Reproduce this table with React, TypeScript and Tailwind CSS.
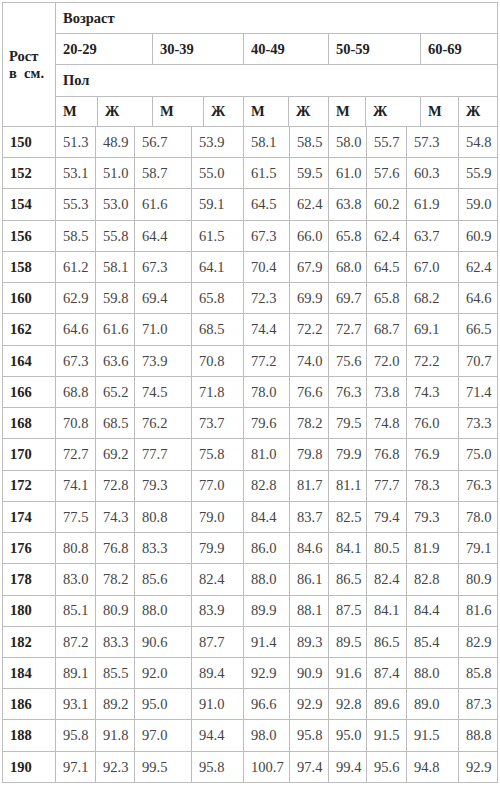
import React from "react";

const data: [string, string[]][] = [
  ["150", ["51.3", "48.9", "56.7", "53.9", "58.1", "58.5", "58.0", "55.7", "57.3", "54.8"]],
  ["152", ["53.1", "51.0", "58.7", "55.0", "61.5", "59.5", "61.0", "57.6", "60.3", "55.9"]],
  ["154", ["55.3", "53.0", "61.6", "59.1", "64.5", "62.4", "63.8", "60.2", "61.9", "59.0"]],
  ["156", ["58.5", "55.8", "64.4", "61.5", "67.3", "66.0", "65.8", "62.4", "63.7", "60.9"]],
  ["158", ["61.2", "58.1", "67.3", "64.1", "70.4", "67.9", "68.0", "64.5", "67.0", "62.4"]],
  ["160", ["62.9", "59.8", "69.4", "65.8", "72.3", "69.9", "69.7", "65.8", "68.2", "64.6"]],
  ["162", ["64.6", "61.6", "71.0", "68.5", "74.4", "72.2", "72.7", "68.7", "69.1", "66.5"]],
  ["164", ["67.3", "63.6", "73.9", "70.8", "77.2", "74.0", "75.6", "72.0", "72.2", "70.7"]],
  ["166", ["68.8", "65.2", "74.5", "71.8", "78.0", "76.6", "76.3", "73.8", "74.3", "71.4"]],
  ["168", ["70.8", "68.5", "76.2", "73.7", "79.6", "78.2", "79.5", "74.8", "76.0", "73.3"]],
  ["170", ["72.7", "69.2", "77.7", "75.8", "81.0", "79.8", "79.9", "76.8", "76.9", "75.0"]],
  ["172", ["74.1", "72.8", "79.3", "77.0", "82.8", "81.7", "81.1", "77.7", "78.3", "76.3"]],
  ["174", ["77.5", "74.3", "80.8", "79.0", "84.4", "83.7", "82.5", "79.4", "79.3", "78.0"]],
  ["176", ["80.8", "76.8", "83.3", "79.9", "86.0", "84.6", "84.1", "80.5", "81.9", "79.1"]],
  ["178", ["83.0", "78.2", "85.6", "82.4", "88.0", "86.1", "86.5", "82.4", "82.8", "80.9"]],
  ["180", ["85.1", "80.9", "88.0", "83.9", "89.9", "88.1", "87.5", "84.1", "84.4", "81.6"]],
  ["182", ["87.2", "83.3", "90.6", "87.7", "91.4", "89.3", "89.5", "86.5", "85.4", "82.9"]],
  ["184", ["89.1", "85.5", "92.0", "89.4", "92.9", "90.9", "91.6", "87.4", "88.0", "85.8"]],
  ["186", ["93.1", "89.2", "95.0", "91.0", "96.6", "92.9", "92.8", "89.6", "89.0", "87.3"]],
  ["188", ["95.8", "91.8", "97.0", "94.4", "98.0", "95.8", "95.0", "91.5", "91.5", "88.8"]],
  ["190", ["97.1", "92.3", "99.5", "95.8", "100.7", "97.4", "99.4", "95.6", "94.8", "92.9"]],
];

const ages = ["20-29", "30-39", "40-49", "50-59", "60-69"];

export default function App() {
  return (
    <div className="w-[500px] h-[786px] bg-white pl-[2px] pt-[2px] font-['Liberation_Serif','DejaVu_Serif',serif]">
      <div className="w-[496px] bg-[#bdbdbd] p-px flex flex-col gap-px text-[14.5px] leading-none">
        <div className="grid grid-cols-[52px_41px_54px_50px_39px_44px_39px_36px_54px_37px_38px] grid-rows-[30px_30px_31px_29px] gap-px">
          <div className="row-span-4 bg-white flex flex-col justify-center pl-[6px] font-bold text-[#222] leading-[17px] pt-[1px]">
            <span>Рост</span>
            <span>в&nbsp;&nbsp;см.</span>
          </div>
          <div className="col-span-10 bg-white flex items-center pl-[7px] font-bold text-[#222]">Возраст</div>
          {ages.map((a) => (
            <div key={a} className="col-span-2 bg-white flex items-center pl-[7px] font-bold text-[#222]">
              {a}
            </div>
          ))}
          <div className="col-span-10 bg-white flex items-center pl-[7px] font-bold text-[#222]">Пол</div>
          {ages.map((a) => (
            <React.Fragment key={a}>
              <div className="bg-white flex items-center pl-[7px] font-bold text-[#222]">М</div>
              <div className="bg-white flex items-center pl-[7px] font-bold text-[#222]">Ж</div>
            </React.Fragment>
          ))}
        </div>
        <div className="grid grid-cols-[52px_39px_38px_56px_51px_45px_38px_37px_39px_51px_38px] auto-rows-[30.24px] gap-px">
          {data.map(([h, vals]) => (
            <React.Fragment key={h}>
              <div className="bg-white flex items-center pl-[7px] font-bold text-[#222]">{h}</div>
              {vals.map((v, i) => (
                <div key={i} className="bg-white flex items-center pl-[7px] text-[#444]">
                  {v}
                </div>
              ))}
            </React.Fragment>
          ))}
        </div>
      </div>
    </div>
  );
}
